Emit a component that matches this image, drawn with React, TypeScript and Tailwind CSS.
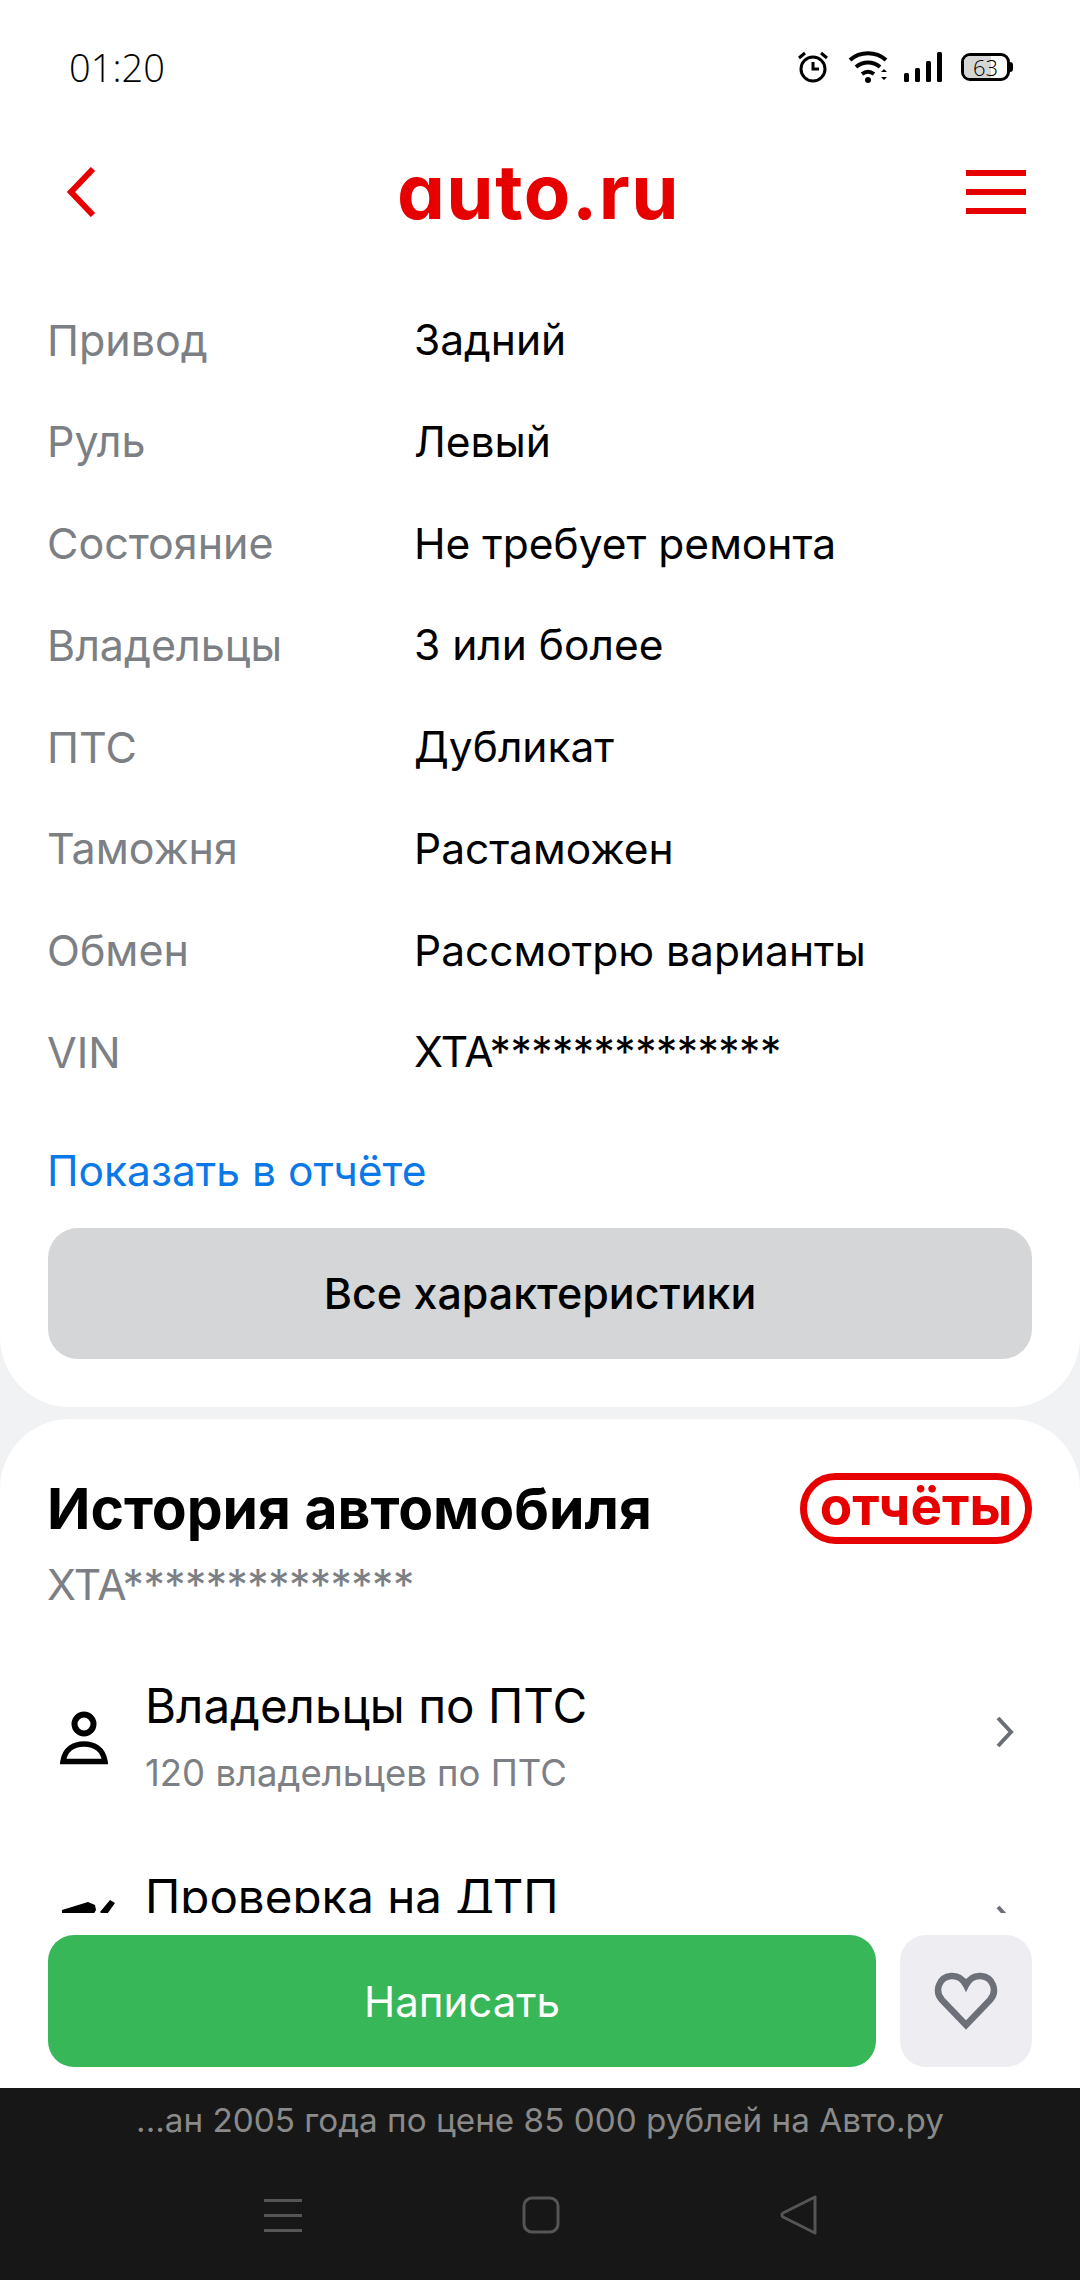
const specs = [
  ["Привод", "Задний"],
  ["Руль", "Левый"],
  ["Состояние", "Не требует ремонта"],
  ["Владельцы", "3 или более"],
  ["ПТС", "Дубликат"],
  ["Таможня", "Растаможен"],
  ["Обмен", "Рассмотрю варианты"],
];

function StatusIcons() {
  return (
    <div className="flex items-center">
      {/* будильник */}
      <svg width="34" height="34" viewBox="0 0 34 34" fill="none" stroke="#000">
        <circle cx="17" cy="19" r="12" strokeWidth="3" />
        <path d="M17 12v7h6" strokeWidth="3" />
        <path d="M3 8l6-5M31 8l-6-5" strokeWidth="3" />
      </svg>
      {/* wifi */}
      <svg width="42" height="32" viewBox="0 0 42 32" fill="none" stroke="#000" className="ml-[18px]">
        <path d="M2 9c10-9 26-9 36 0" strokeWidth="4" />
        <path d="M8 16c7-6 17-6 24 0" strokeWidth="4" />
        <path d="M14 23c4-3 8-3 12 0" strokeWidth="4" />
        <circle cx="20" cy="29" r="3" fill="#000" stroke="none" />
        <path d="M33 21l3-3 3 3zM33 26l3 3 3-3z" fill="#000" stroke="none" />
      </svg>
      {/* сигнал */}
      <svg width="38" height="30" viewBox="0 0 38 30" fill="#000" className="ml-[14px]">
        <rect x="0" y="21" width="5" height="9" rx="1.5" />
        <rect x="11" y="16" width="5" height="14" rx="1.5" />
        <rect x="22" y="9" width="5" height="21" rx="1.5" />
        <rect x="33" y="0" width="5" height="30" rx="1.5" />
      </svg>
      {/* батарея */}
      <div className="relative ml-[19px] flex h-[28px] w-[49px] items-center justify-center overflow-hidden rounded-[9px] border-[3px] border-black text-[22px] leading-none text-black">
        <div className="absolute inset-y-0 left-0 w-[63%] bg-[#d6d6d6]" />
        <span className="relative font-['Open_Sans',sans-serif] font-light">63</span>
      </div>
      <div className="h-[10px] w-[3px] rounded-r-full bg-black" />
    </div>
  );
}

function Header() {
  return (
    <div className="flex h-[124px] items-center justify-between pl-[65px] pr-[54px]">
      <svg width="32" height="50" viewBox="0 0 32 50" fill="none" stroke="#e60000" strokeWidth="6">
        <path d="M28 2L6 25l22 23" />
      </svg>
      <span className="pb-[3px] pl-[14px] font-['Inter',sans-serif] text-[76px] font-bold leading-none tracking-[1.5px] text-[#e60000] [font-feature-settings:'cv11']">
        auto.ru
      </span>
      <div className="flex w-[60px] flex-col gap-[13px]">
        <div className="h-[6px] bg-[#e60000]" />
        <div className="h-[6px] bg-[#e60000]" />
        <div className="h-[6px] bg-[#e60000]" />
      </div>
    </div>
  );
}

function PersonIcon() {
  return (
    <svg width="48" height="54" viewBox="0 0 48 54" fill="none" stroke="#000">
      <circle cx="24" cy="13" r="9.500" strokeWidth="6" />
      <path d="M3 50.500C5 38 14 33 24 33s19 5 21 17.500z" strokeWidth="5.500" />
    </svg>
  );
}

function Chevron() {
  return (
    <svg width="20" height="32" viewBox="0 0 20 32" fill="none" stroke="#6b6f75" strokeWidth="4">
      <path d="M3 2l13 14L3 30" />
    </svg>
  );
}

export default function App() {
  return (
    <div className="relative flex h-[2280px] w-[1080px] flex-col overflow-hidden bg-[#f1f2f4] font-['Inter',sans-serif] text-black">
      <div className="flex min-h-0 flex-1 flex-col overflow-hidden">
        <div className="shrink-0 rounded-b-[70px] bg-white pb-[48px]">
          <div className="flex h-[130px] items-center justify-between pl-[69px] pr-[67px] pt-[4px]">
            <span className="font-['Open_Sans',sans-serif] text-[38px] font-light leading-none">01:20</span>
            <StatusIcons />
          </div>
          <Header />
          <div className="pl-[47px] pr-[48px] pt-[35px]">
            {specs.map(([label, value]) => (
              <div key={label} className="flex h-[101.75px] items-center">
                <span className="w-[367px] text-[43px] text-[#7c8085]">{label}</span>
                <span className="text-[42.5px]">{value}</span>
              </div>
            ))}
            <div className="flex h-[101.75px] items-center">
              <span className="w-[367px] text-[43px] text-[#7c8085]">VIN</span>
              <span className="text-[42.5px] tracking-[-0.5px]">XTA**************</span>
            </div>
            <div className="mt-[38px] h-[60px] text-[42.5px] leading-[60px] text-[#0a78e6]">Показать в отчёте</div>
            <button className="ml-[1px] mt-[27px] flex h-[131px] w-[984px] items-center justify-center rounded-[30px] bg-[#d5d6d8] text-[43px] font-medium">
              Все характеристики
            </button>
          </div>
        </div>

        <div className="mt-[12px] flex-1 rounded-t-[70px] bg-white pl-[47px] pr-[48px] pt-[54px]">
          <div className="flex items-center justify-between">
            <span className="text-[57px] font-bold leading-none">История автомобиля</span>
            <div className="flex h-[71px] w-[232px] items-center justify-center rounded-full border-[7px] border-[#e60000] pb-[4px] text-[53px] font-bold lowercase leading-none text-[#e60000]">
              ОТЧЁТЫ
            </div>
          </div>
          <div className="mt-[19px] h-[44px] text-[42.5px] tracking-[-0.5px] leading-[44px] text-[#7c8085]">XTA**************</div>

          <div className="mt-[74px] flex items-center">
            <div className="w-[98px] pl-[13px] pt-[2px]">
              <PersonIcon />
            </div>
            <div className="flex-1">
              <div className="text-[47.5px] leading-[50px]">Владельцы по ПТС</div>
              <div className="mt-[22px] text-[36.5px] leading-[40px] text-[#7c8085]">120 владельцев по ПТС</div>
            </div>
            <div className="mb-[10px] mr-[17px]">
              <Chevron />
            </div>
          </div>

          <div className="mt-[79px] flex items-start">
            <div className="w-[98px] pl-[15px] pt-[28px]">
              <svg width="54" height="30" viewBox="0 0 54 30" fill="#000">
                <path d="M0 10L26 2l7 3 1 5-8 14-14-4-12 4zM38 12L48 0l5 3-10 14z" />
              </svg>
            </div>
            <div className="flex-1 text-[47.5px] leading-[50px]">Проверка на ДТП</div>
            <div className="mr-[17px] pt-[33px]">
              <Chevron />
            </div>
          </div>
        </div>
      </div>

      {/* панель действий поверх контента */}
      <div className="absolute inset-x-0 bottom-[192px] flex h-[175px] gap-[24px] bg-white px-[48px] pt-[22px]">
        <button className="flex h-[132px] flex-1 items-center justify-center rounded-[26px] bg-[#37b757] text-[42px] text-white">
          Написать
        </button>
        <button className="flex h-[132px] w-[132px] items-center justify-center rounded-[26px] bg-[#eeeef2]">
          <svg width="64" height="58" viewBox="0 0 64 58" fill="none" stroke="#6d7078" strokeWidth="6.500">
            <path d="M32 53L8 28C0 19 5 5 17 4c7-.5 12 3 15 9 3-6 8-9.500 15-9 12 1 17 15 9 24z" />
          </svg>
        </button>
      </div>

      <div className="relative h-[192px] shrink-0 bg-[#171717]">
        <div className="pt-[12px] text-center text-[33.250px] leading-[40px] text-[#8a8a8a]">
          ...ан 2005 года по цене 85 000 рублей на Авто.ру
        </div>
        <div className="mt-[55px] flex items-center justify-center gap-[220px] pl-[1px]">
          <svg width="38" height="34" viewBox="0 0 38 34" fill="#555">
            <rect y="1" width="38" height="3" />
            <rect y="16" width="38" height="3" />
            <rect y="31" width="38" height="3" />
          </svg>
          <svg width="38" height="38" viewBox="0 0 38 38" fill="none" stroke="#555" strokeWidth="3">
            <rect x="2" y="2" width="34" height="34" rx="8" />
          </svg>
          <svg width="38" height="40" viewBox="0 0 38 40" fill="none" stroke="#555" strokeWidth="3" strokeLinejoin="round">
            <path d="M35 2v36L3 22c-1.500-1-1.500-3 0-4z" />
          </svg>
        </div>
      </div>
    </div>
  );
}
